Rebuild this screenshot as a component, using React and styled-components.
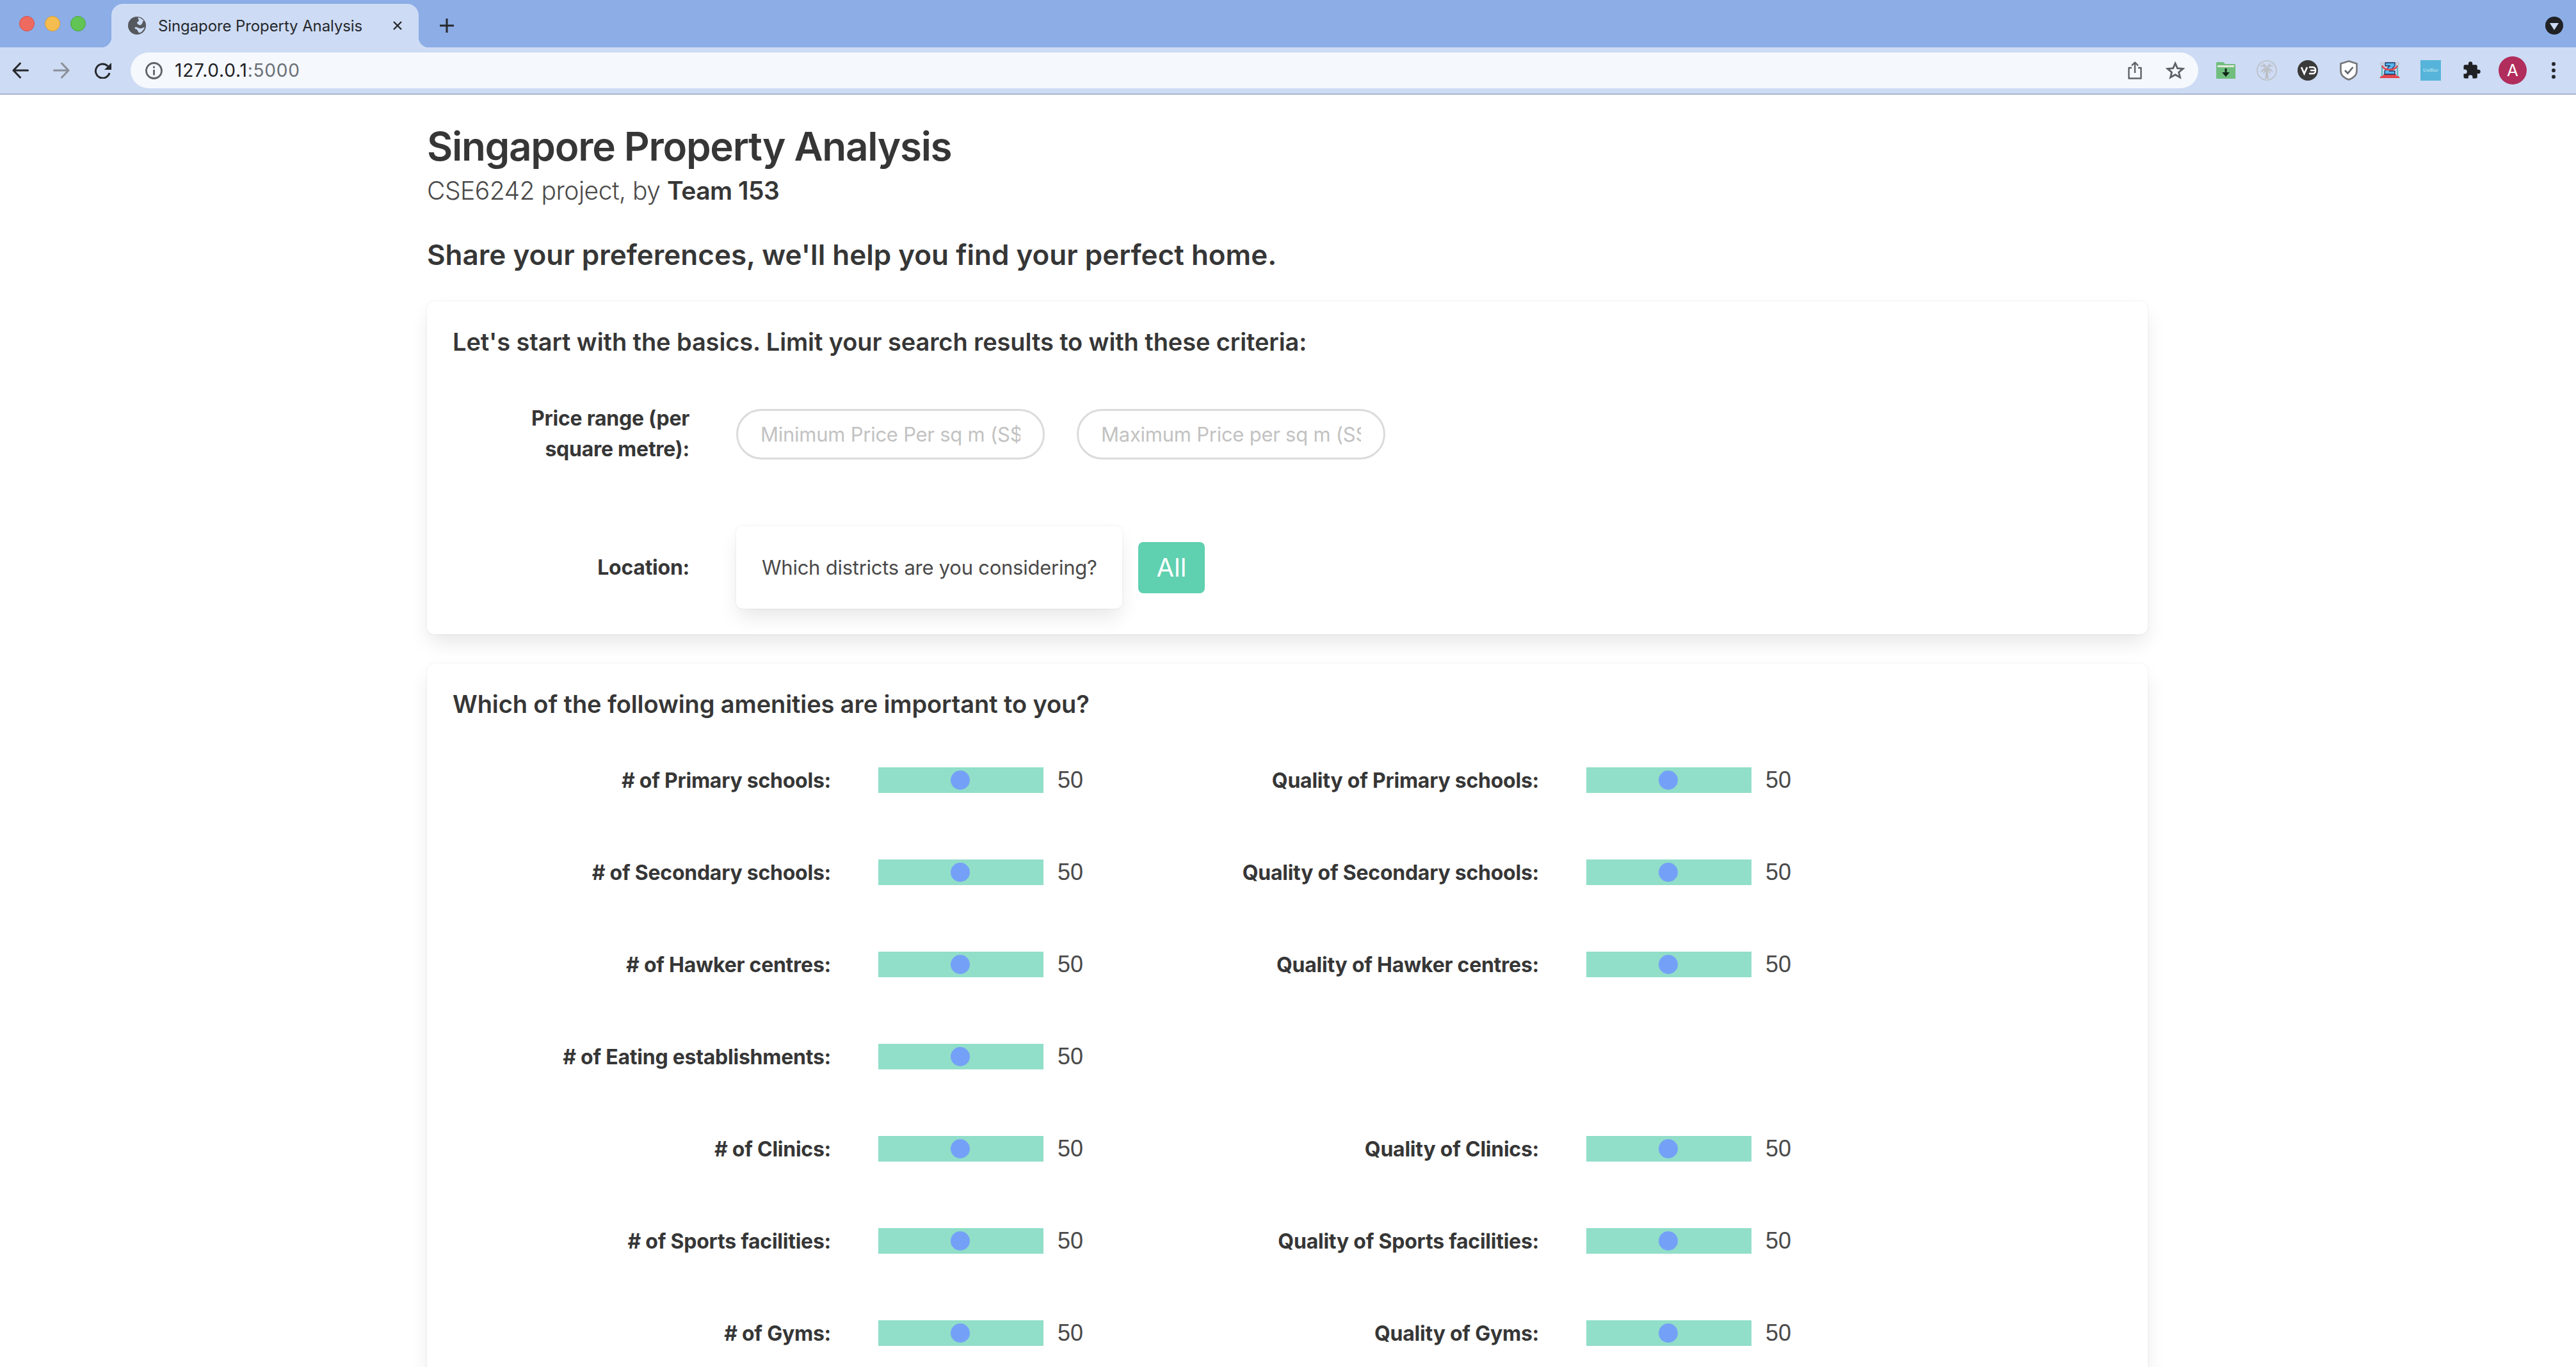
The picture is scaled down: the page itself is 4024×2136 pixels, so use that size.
import React from 'react';
import styled, { createGlobalStyle } from 'styled-components';

const amenities = [
    ['Primary schools', true],
    ['Secondary schools', true],
    ['Hawker centres', true],
    ['Eating establishments', false],
    ['Clinics', true],
    ['Sports facilities', true],
    ['Gyms', true],
];

const extensionIcons = [
    <svg width="30" height="26" viewBox="0 0 30 26" key="folder">
        <path d="M0 1.500A1.500 1.500 0 0 1 1.500 0H11l3 3h14.500A1.500 1.500 0 0 1 30 4.500V26H0z" fill="#6fbe7e" />
        <rect x="2" y="5" width="26" height="3" fill="#e3e6dc" />
        <path d="M15 10v9" stroke="#11261a" strokeWidth="3" />
        <path d="M9 16h12l-6 7z" fill="#11261a" />
    </svg>,
    <svg width="32" height="32" viewBox="0 0 32 32" fill="none" stroke="#bcbfc5" strokeWidth="1.600" key="palm">
        <circle cx="16" cy="16" r="15" />
        <path d="M15 14c0 5 0 10-1 14h4c-1-4-1-9-1-14z" fill="#bcbfc5" />
        <path d="M16 13C13 8 9 7 6 9c3 0 6 1 10 4zM16 13c3-5 7-6 10-4-3 0-6 1-10 4zM16 13c-4-1-8 1-9 6 3-3 5-4 9-6zM16 13c4-1 8 1 9 6-3-3-5-4-9-6zM16 13c-1-4-3-7-6-8 2 3 3 5 6 8zM16 13c1-4 3-7 6-8-2 3-3 5-6 8zM16 13c-3 1-5 4-5 8 2-3 3-5 5-8zM16 13c3 1 5 4 5 8-2-3-3-5-5-8z" fill="#bcbfc5" strokeWidth="0.800" />
    </svg>,
    <svg width="32" height="32" viewBox="0 0 32 32" key="vd">
        <circle cx="16" cy="16" r="16" fill="#3a3a3a" />
        <path d="M6 11l4.500 10L15 11M18 11h6a4 4 0 0 1 4 4v2a4 4 0 0 1-4 4h-6M20 16h7" stroke="#fff" strokeWidth="2.600" fill="none" />
    </svg>,
    <svg width="28" height="32" viewBox="0 0 28 32" key="shield">
        <path d="M14 1.500l12.500 4v11c0 7-5.500 11.500-12.500 14C7 28 1.500 23.500 1.500 16.500v-11z" fill="#fff" stroke="#747678" strokeWidth="2.600" />
        <path d="M8 16l4.500 4.500L20.500 11" stroke="#5f6368" strokeWidth="2.600" fill="none" />
    </svg>,
    <svg width="32" height="26" viewBox="0 0 32 26" key="z">
        <path d="M0 25l3-4h26l3 4z" fill="#e2454b" />
        <rect x="6" y="19" width="20" height="4" fill="#e2454b" />
        <path d="M4 5v17M28 5v17" stroke="#62b8c4" strokeWidth="2.400" />
        <circle cx="4" cy="3" r="2.200" fill="#e6eaf0" stroke="#8a8f99" strokeWidth="0.800" />
        <circle cx="28" cy="3" r="2.200" fill="#e6eaf0" stroke="#8a8f99" strokeWidth="0.800" />
        <path d="M9 1h15v5L16 14h8v5H8v-5l8-8H9z" fill="#57b5ee" stroke="#15325c" strokeWidth="1.300" />
        <path d="M4 6c5 8 19 8 24 0" stroke="#e2454b" strokeWidth="2.400" fill="none" />
    </svg>,
];

const App = () => {
    return (
        <Page>
            <GlobalStyle />
            <TabStrip>
                <TrafficLights>
                    <Light color="#ee6a5f" edge="#d4524a" />
                    <Light color="#f5bd4f" edge="#d69e35" />
                    <Light color="#61c454" edge="#4ba63f" />
                </TrafficLights>
                <Tab>
                    <svg width="28" height="28" viewBox="0 0 28 28">
                        <circle cx="14" cy="14" r="14" fill="#55585d" />
                        <path d="M15 1.500c4 0 7 2 9.500 5-2.500 1.500-1.500 5-4.500 6.500-2 1-5-1-6-3 0-2 3-2.500 3-4.500z" fill="#cddbf4" />
                        <path d="M10 17c3-1 5 0 7 1 3 1 6 0 9-2-1 4-4 8-8 9.500-2-1-3-3.500-4-5.500-2 0-3-1-4-3z" fill="#cddbf4" />
                    </svg>
                    <TabTitle>Singapore Property Analysis</TabTitle>
                    <svg width="16" height="16" viewBox="0 0 16 16" stroke="#26282c" strokeWidth="2.400"><path d="M2 2l12 12M14 2L2 14" /></svg>
                </Tab>
                <NewTab>
                    <svg width="24" height="24" viewBox="0 0 24 24" stroke="#26282c" strokeWidth="3"><path d="M12 1v22M1 12h22" /></svg>
                </NewTab>
                <ProfileDot>
                    <svg width="28" height="28" viewBox="0 0 28 28">
                        <circle cx="14" cy="14" r="14" fill="#202124" />
                        <path d="M7 10h14l-7 11z" fill="#cddbf4" />
                    </svg>
                </ProfileDot>
            </TabStrip>
            <Toolbar>
                <NavIcons>
                    <svg width="26" height="26" viewBox="0 0 26 26" fill="none" stroke="#26282c" strokeWidth="3" strokeLinecap="round" strokeLinejoin="round"><path d="M24.500 13H2M12.500 2L2 13l10.500 11" /></svg>
                    <svg width="26" height="26" viewBox="0 0 26 26" fill="none" stroke="#8b9098" strokeWidth="3" strokeLinecap="round" strokeLinejoin="round"><path d="M1.500 13H24M13.500 2L24 13 13.500 24" /></svg>
                    <svg width="28" height="26" viewBox="0 0 28 26"><path d="M24 17a11 11 0 1 1-2.500-10.500" fill="none" stroke="#26282c" strokeWidth="3" /><path d="M27 1v11H16z" fill="#26282c" /></svg>
                </NavIcons>
                <AddressBar>
                    <svg width="27" height="27" viewBox="0 0 27 27" fill="none" stroke="#5f6368" strokeWidth="2.800">
                        <circle cx="13.500" cy="13.500" r="12" /><path d="M13.500 12v8.500M13.500 6.500v3" />
                    </svg>
                    <Url>127.0.0.1<UrlPort>:5000</UrlPort></Url>
                    <AddressActions>
                        <svg width="22" height="28" viewBox="0 0 22 28" fill="none" stroke="#5f6368" strokeWidth="2.400" strokeLinejoin="round"><path d="M6 10H1.500v16.500h19V10H16M11 18V2M6 6.500L11 1.500l5 5" /></svg>
                        <svg width="30" height="28" viewBox="0 0 30 28" fill="none" stroke="#5f6368" strokeWidth="2.800"><path d="M15 3l3.400 7.600 8.600.8-6.500 5.500 2 8.100-7.500-4.300L7.500 25l2-8.100L3 11.400l8.600-.8z" /></svg>
                    </AddressActions>
                </AddressBar>
                <Extensions>
                    {extensionIcons.map((icon, i) => <ExtensionSlot key={i}>{icon}</ExtensionSlot>)}
                    <ExtensionSlot><UnBlur>UnBlur</UnBlur></ExtensionSlot>
                    <ExtensionSlot>
                        <svg width="30" height="30" viewBox="0 0 24 24" fill="#202124"><path d="M20.500 11H19V7a2 2 0 0 0-2-2h-4V3.500a2.500 2.500 0 0 0-5 0V5H4a2 2 0 0 0-2 2v3.800h1.500a2.700 2.700 0 0 1 0 5.400H2V20a2 2 0 0 0 2 2h3.800v-1.500a2.700 2.700 0 0 1 5.400 0V22H17a2 2 0 0 0 2-2v-4h1.500a2.500 2.500 0 0 0 0-5z" /></svg>
                    </ExtensionSlot>
                    <ExtensionSlot><Avatar>A</Avatar></ExtensionSlot>
                    <ExtensionSlot>
                        <svg width="8" height="28" viewBox="0 0 8 28" fill="#26282c"><circle cx="4" cy="4" r="3" /><circle cx="4" cy="14" r="3" /><circle cx="4" cy="24" r="3" /></svg>
                    </ExtensionSlot>
                </Extensions>
            </Toolbar>
            <Container>
                <Title>Singapore Property Analysis</Title>
                <Subtitle>CSE6242 project, by <strong>Team 153</strong></Subtitle>
                <Lead>Share your preferences, we'll help you find your perfect home.</Lead>
                <Box>
                    <BoxTitle>Let's start with the basics. Limit your search results to with these criteria:</BoxTitle>
                    <BasicsRow>
                        <BasicsLabel>Price range (per square metre):</BasicsLabel>
                        <PriceInput placeholder="Minimum Price Per sq m (S$)" />
                        <PriceInput placeholder="Maximum Price per sq m (S$)" />
                    </BasicsRow>
                    <LocationRow>
                        <BasicsLabel>Location:</BasicsLabel>
                        <DistrictSelect>Which districts are you considering?</DistrictSelect>
                        <AllButton>All</AllButton>
                    </LocationRow>
                </Box>
                <Box>
                    <BoxTitle>Which of the following amenities are important to you?</BoxTitle>
                    <AmenityGrid>
                        {amenities.map(([name, hasQuality]) => (
                            <React.Fragment key={name}>
                                <Amenity label={`# of ${name}:`} />
                                {hasQuality ? <Amenity label={`Quality of ${name}:`} /> : <div />}
                            </React.Fragment>
                        ))}
                    </AmenityGrid>
                </Box>
            </Container>
        </Page>
    );
};

const Amenity = ({ label }) => (
    <AmenityCell>
        <AmenityLabel>{label}</AmenityLabel>
        <Track><Thumb /></Track>
        <SliderValue>50</SliderValue>
    </AmenityCell>
);

export default App;

const GlobalStyle = createGlobalStyle`
    html, body {
        margin: 0;
        padding: 0;
        background: #fff;
    }
    * {
        box-sizing: border-box;
    }
`;

const Page = styled.div`
    height: 2136px;
    overflow: hidden;
    font-family: Inter, "Liberation Sans", sans-serif;
    color: #363636;
`;

const TabStrip = styled.div`
    display: flex;
    align-items: flex-end;
    height: 74px;
    background: #8cade6;
`;

const TrafficLights = styled.div`
    display: flex;
    align-self: flex-start;
    gap: 16px;
    width: 174px;
    padding: 25px 0 0 30px;
`;

const Light = styled.span`
    width: 24px;
    height: 24px;
    border-radius: 50%;
    background: ${({ color }) => color};
    border: 1px solid ${({ edge }) => edge};
`;

const Tab = styled.div`
    position: relative;
    display: flex;
    align-items: center;
    width: 480px;
    height: 68px;
    padding: 0 25px 0 26px;
    background: #cddbf4;
    border-radius: 18px 18px 0 0;

    &::before, &::after {
        content: '';
        position: absolute;
        bottom: 0;
        width: 16px;
        height: 16px;
    }
    &::before {
        left: -16px;
        background: radial-gradient(circle at 0 0, transparent 16px, #cddbf4 16.5px);
    }
    &::after {
        right: -16px;
        background: radial-gradient(circle at 100% 0, transparent 16px, #cddbf4 16.5px);
    }
`;

const TabTitle = styled.span`
    flex: 1;
    margin-left: 19px;
    font-size: 24px;
    letter-spacing: -0.1px;
    color: #26282c;
    white-space: nowrap;
`;

const NewTab = styled.div`
    display: flex;
    align-items: center;
    align-self: stretch;
    padding: 6px 0 0 32px;
`;

const ProfileDot = styled.div`
    display: flex;
    align-self: flex-start;
    margin-left: auto;
    padding: 26px 20px 0 0;
`;

const Toolbar = styled.div`
    display: flex;
    align-items: center;
    height: 74px;
    background: #cddbf4;
    border-bottom: 2px solid #a9b5cd;
`;

const NavIcons = styled.div`
    display: flex;
    align-items: center;
    gap: 38px;
    width: 204px;
    padding-left: 19px;
`;

const AddressBar = styled.div`
    display: flex;
    align-items: center;
    width: 3230px;
    height: 56px;
    padding: 0 21px 0 23px;
    background: #f5f8fd;
    border-radius: 28px;
`;

const Url = styled.span`
    margin-left: 19px;
    font-size: 28px;
    letter-spacing: 0.8px;
    color: #202124;
`;

const UrlPort = styled.span`
    color: #6b6f75;
`;

const AddressActions = styled.div`
    display: flex;
    align-items: center;
    gap: 37px;
    margin-left: auto;
`;

const Extensions = styled.div`
    display: flex;
    align-items: center;
    padding-left: 11px;
`;

const ExtensionSlot = styled.div`
    display: flex;
    align-items: center;
    justify-content: center;
    width: 64px;
`;

const UnBlur = styled.div`
    width: 32px;
    height: 32px;
    background: #56b4da;
    color: #dff1f8;
    font-family: "DejaVu Serif", serif;
    font-size: 6.500px;
    line-height: 32px;
    text-align: center;
`;

const Avatar = styled.div`
    width: 44px;
    height: 44px;
    border-radius: 50%;
    background: #b02d5c;
    color: #fff;
    font-size: 26px;
    line-height: 44px;
    text-align: center;
`;

const Container = styled.div`
    width: 2688px;
    margin: 0 0 0 667px;
    padding-top: 43px;
`;

const Title = styled.h1`
    margin: 0;
    font-size: 62px;
    line-height: 76px;
    font-weight: 600;
    letter-spacing: -1.3px;
    color: #363636;
`;

const Subtitle = styled.p`
    margin: 6px 0 0;
    font-size: 39px;
    line-height: 50px;
    font-weight: 300;
    letter-spacing: -0.5px;
    color: #4a4a4a;

    strong {
        font-weight: 600;
        color: #363636;
    }
`;

const Lead = styled.h2`
    margin: 47px 0 45px;
    font-size: 44px;
    line-height: 56px;
    font-weight: 600;
    color: #363636;
`;

const Box = styled.section`
    margin-bottom: 46px;
    padding: 40px;
    background: #fff;
    border-radius: 12px;
    box-shadow: 0 16px 32px -4px rgba(10, 10, 10, 0.1), 0 0 0 2px rgba(10, 10, 10, 0.02);
`;

const BoxTitle = styled.h3`
    margin: 0;
    font-size: 38px;
    line-height: 46px;
    font-weight: 600;
    letter-spacing: -0.1px;
    color: #363636;
`;

const BasicsRow = styled.div`
    display: flex;
    align-items: center;
    gap: 50px;
    margin-top: 73px;
`;

const LocationRow = styled(BasicsRow)`
    margin-top: 96px;
`;

const BasicsLabel = styled.label`
    width: 370px;
    margin-right: 23px;
    padding-left: 61px;
    font-size: 32px;
    line-height: 48px;
    font-weight: 700;
    letter-spacing: -0.25px;
    color: #363636;
    text-align: right;
`;

const PriceInput = styled.input`
    width: 482px;
    height: 79px;
    padding: 0 35px;
    border: 3px solid #dbdbdb;
    border-radius: 40px;
    background: #fff;
    font-family: inherit;
    font-size: 31px;
    letter-spacing: -0.25px;
    outline: none;

    &::placeholder {
        color: #c2c2c2;
    }
`;

const DistrictSelect = styled.div`
    display: flex;
    align-items: center;
    width: 603px;
    height: 129px;
    margin-right: -25px;
    padding-left: 40px;
    background: #fff;
    border-radius: 10px;
    box-shadow: 0 16px 32px -4px rgba(10, 10, 10, 0.1), 0 0 0 2px rgba(10, 10, 10, 0.02);
    font-size: 31px;
    letter-spacing: -0.25px;
    color: #4a4a4a;
`;

const AllButton = styled.button`
    width: 104px;
    height: 80px;
    padding: 0;
    border: none;
    border-radius: 8px;
    background: #5fd0b0;
    color: #fff;
    font-family: inherit;
    font-size: 40px;
`;

const AmenityGrid = styled.div`
    display: grid;
    grid-template-columns: 1106px 1106px;
    grid-auto-rows: 48px;
    row-gap: 96px;
    margin-top: 72px;
`;

const AmenityCell = styled.div`
    display: flex;
    align-items: center;
`;

const AmenityLabel = styled.label`
    width: 591px;
    margin-right: 74px;
    font-size: 32px;
    font-weight: 700;
    letter-spacing: -0.25px;
    color: #363636;
    text-align: right;
`;

const Track = styled.div`
    display: flex;
    align-items: center;
    justify-content: center;
    width: 258px;
    height: 40px;
    background: #91dec9;
`;

const Thumb = styled.span`
    width: 30px;
    height: 30px;
    margin-right: 2px;
    border-radius: 50%;
    background: #74a1f7;
`;

const SliderValue = styled.span`
    margin-left: 22px;
    font-family: "Liberation Sans", Arial, sans-serif;
    font-size: 36px;
    color: #4a4a4a;
`;
